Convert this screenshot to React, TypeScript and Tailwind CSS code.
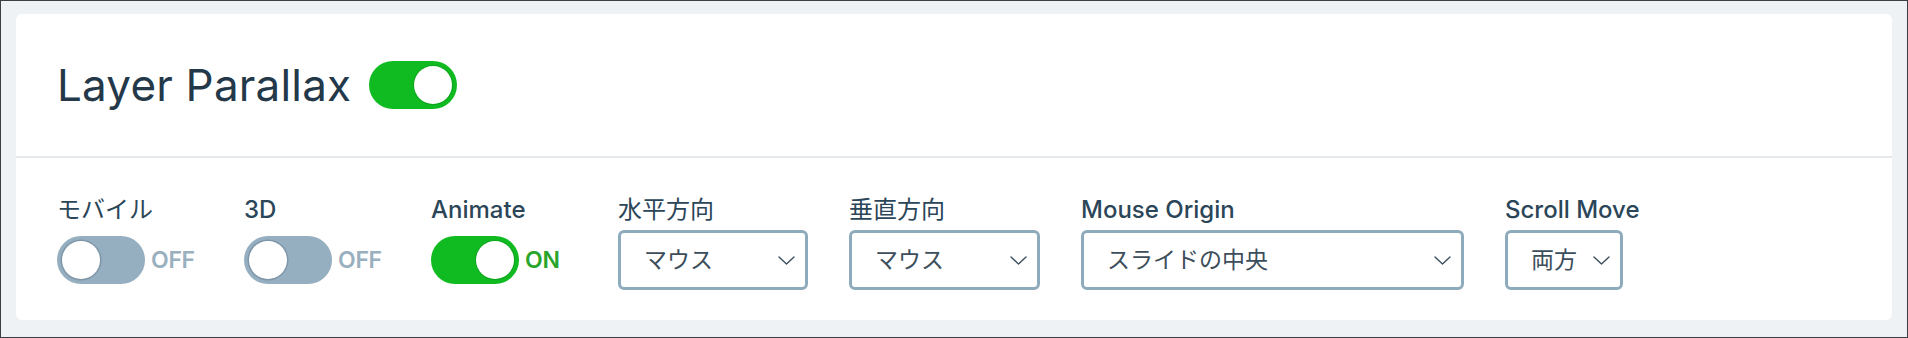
const font = { fontFamily: "Inter, 'Noto Sans CJK JP', sans-serif" }

interface ToggleProps {
  on: boolean
}

const Toggle = ({ on }: ToggleProps) => (
  <div
    className={`flex items-center w-[88px] h-[48px] rounded-full p-[5px] ${
      on ? "bg-[#10bb22] justify-end" : "bg-[#95afc0] justify-start"
    }`}
  >
    <div
      className={`w-[38px] h-[38px] rounded-full bg-white ${
        on ? "shadow-[0_0_0_1px_#0ea51f]" : "shadow-[0_0_0_1.5px_#7e97a8]"
      }`}
    />
  </div>
)

const Chevron = () => (
  <svg width="19" height="11" viewBox="0 0 19 11" fill="none" className="text-[#3c4e5b]">
    <path d="M2 2 L9.5 9 L17 2" stroke="currentColor" strokeWidth="1.4" strokeLinecap="round" strokeLinejoin="round" />
  </svg>
)

// latin labels read heavier than the japanese ones in the reference
const Label = ({ text, jp }: { text: string; jp?: boolean }) => (
  <span className={`text-[24px] leading-[29px] text-[#2b4658] ${jp ? "font-normal" : "font-medium"}`}>
    {text}
  </span>
)

const ToggleField = ({ label, on, jp }: { label: string; on: boolean; jp?: boolean }) => (
  <div className="flex flex-col w-[146px]">
    <Label text={label} jp={jp} />
    <div className="flex items-center h-[60px] mt-[6px]">
      <Toggle on={on} />
      <span
        className={`ml-[6px] text-[23px] font-semibold tracking-[-0.3px] ${
          on ? "text-[#2aa52b]" : "text-[#9ab0bf]"
        }`}
      >
        {on ? "ON" : "OFF"}
      </span>
    </div>
  </div>
)

const SelectField = ({
  label,
  value,
  width,
  jp,
}: {
  label: string
  value: string
  width: string
  jp?: boolean
}) => (
  <div className="flex flex-col">
    <Label text={label} jp={jp} />
    <div
      className={`mt-[6px] h-[60px] ${width} flex items-center justify-between border-[3px] border-[#8eabbd] rounded-[6px] pl-[23px] pr-[9px] bg-white`}
    >
      <span className="text-[23px] text-[#3c4e5b]">{value}</span>
      <Chevron />
    </div>
  </div>
)

const App = () => {
  return (
    <div
      className="w-[1908px] h-[338px] border border-[#3b3f44] bg-[#eef2f5] pt-[13px] px-[15px]"
      style={font}
    >
      <div className="h-[306px] bg-white rounded-[6px] flex flex-col">
        <div className="h-[144px] flex items-center pl-[41px] gap-[18px] border-b-2 border-[#e6e9ec]">
          <h1 className="text-[44px] leading-none text-[#233849] tracking-[0.2px]">Layer Parallax</h1>
          <Toggle on />
        </div>
        <div className="flex pl-[41px] pt-[37px] gap-[41px]">
          <ToggleField label="モバイル" on={false} jp />
          <ToggleField label="3D" on={false} />
          <ToggleField label="Animate" on />
          <SelectField label="水平方向" value="マウス" width="w-[190px]" jp />
          <SelectField label="垂直方向" value="マウス" width="w-[191px]" jp />
          <SelectField label="Mouse Origin" value="スライドの中央" width="w-[383px]" />
          <SelectField label="Scroll Move" value="両方" width="w-[118px]" />
        </div>
      </div>
    </div>
  )
}

export default App
